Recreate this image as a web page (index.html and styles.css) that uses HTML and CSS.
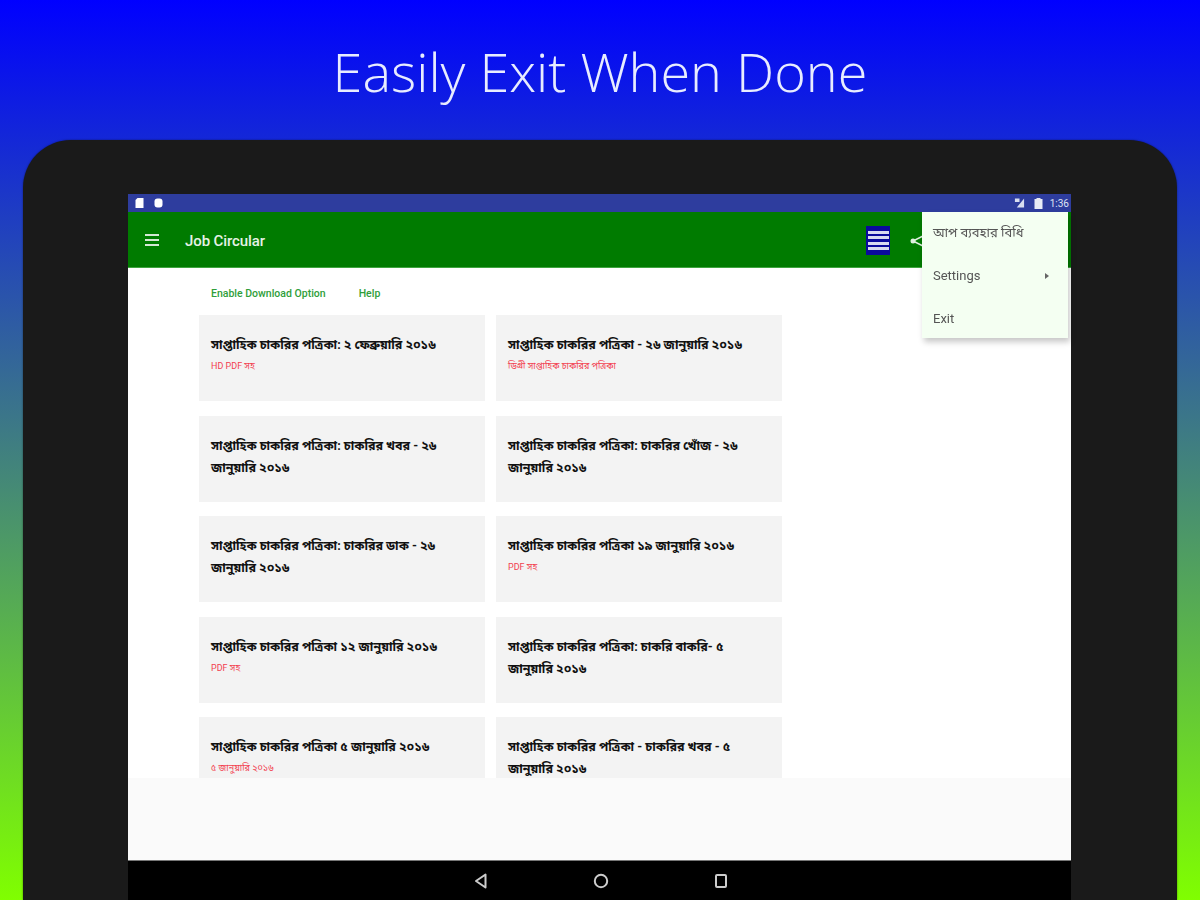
FILE: index.html
```html
<!DOCTYPE html>
<html lang="bn">
<head>
<meta charset="utf-8">
<title>Easily Exit When Done</title>
<link rel="stylesheet" href="styles.css">
</head>
<body>
<h1 class="headline">Easily Exit When Done</h1>
<div class="device">
  <div class="screen">
    <div class="status">
      <div class="status-group">
        <svg class="st-ic" viewBox="0 0 10 12"><path d="M1 3l2-2h6v10H1z" fill="#fff"/></svg>
        <svg class="st-ic" viewBox="0 0 10 12"><rect x="1" y="1.500" width="8" height="9" rx="3" fill="#fff"/></svg>
      </div>
      <div class="status-group">
        <svg class="st-ic" viewBox="0 0 12 12"><path d="M1 1h5v4H1zM11 1v10H3z" fill="#d8def0"/></svg>
        <svg class="st-ic" viewBox="0 0 10 12"><path d="M3 2V1h4v1h2v10H1V2z" fill="#e8ebf5"/></svg>
        <span class="clock">1:36</span>
      </div>
    </div>
    <header class="appbar">
      <svg class="burger" viewBox="0 0 14 12"><path d="M0 1h14M0 6h14M0 11h14" stroke="#d4e8d4" stroke-width="2"/></svg>
      <span class="app-title">Job Circular</span>
      <div class="app-actions">
        <div class="list-btn"><span></span><span></span><span></span><span></span></div>
        <svg class="share" viewBox="0 0 16 16"><path d="M13 3L3 8l10 5" stroke="#dff0df" stroke-width="1.500" fill="none"/><circle cx="3" cy="8" r="2.500" fill="#dff0df"/></svg>
      </div>
    </header>
    <main class="content">
      <nav class="links"><span>Enable Download Option</span><span>Help</span></nav>
      <div class="grid">
        <article class="card"><h2>সাপ্তাহিক চাকরির পত্রিকা: ২ ফেব্রুয়ারি ২০১৬</h2><p>HD PDF সহ</p></article>
        <article class="card"><h2>সাপ্তাহিক চাকরির পত্রিকা - ২৬ জানুয়ারি ২০১৬</h2><p>ডিগ্রী সাপ্তাহিক চাকরির পত্রিকা</p></article>
        <article class="card"><h2>সাপ্তাহিক চাকরির পত্রিকা: চাকরির খবর - ২৬ জানুয়ারি ২০১৬</h2></article>
        <article class="card"><h2>সাপ্তাহিক চাকরির পত্রিকা: চাকরির খোঁজ - ২৬ জানুয়ারি ২০১৬</h2></article>
        <article class="card"><h2>সাপ্তাহিক চাকরির পত্রিকা: চাকরির ডাক - ২৬ জানুয়ারি ২০১৬</h2></article>
        <article class="card"><h2>সাপ্তাহিক চাকরির পত্রিকা ১৯ জানুয়ারি ২০১৬</h2><p>PDF সহ</p></article>
        <article class="card"><h2>সাপ্তাহিক চাকরির পত্রিকা ১২ জানুয়ারি ২০১৬</h2><p>PDF সহ</p></article>
        <article class="card"><h2>সাপ্তাহিক চাকরির পত্রিকা: চাকরি বাকরি- ৫ জানুয়ারি ২০১৬</h2></article>
        <article class="card"><h2>সাপ্তাহিক চাকরির পত্রিকা ৫ জানুয়ারি ২০১৬</h2><p>৫ জানুয়ারি ২০১৬</p></article>
        <article class="card"><h2>সাপ্তাহিক চাকরির পত্রিকা - চাকরির খবর - ৫ জানুয়ারি ২০১৬</h2></article>
      </div>
    </main>
    <div class="ad-strip"></div>
    <footer class="navbar">
      <svg class="nav-ic" viewBox="0 0 16 16"><path d="M12.500 1.500v13L3 8z" fill="none" stroke="#ccc" stroke-width="2" stroke-linejoin="round"/></svg>
      <svg class="nav-ic" viewBox="0 0 16 16"><circle cx="8" cy="8" r="6.200" fill="none" stroke="#ccc" stroke-width="2"/></svg>
      <svg class="nav-ic" viewBox="0 0 16 16"><rect x="3" y="2" width="10" height="12" rx="1" fill="none" stroke="#ccc" stroke-width="2"/></svg>
    </footer>
    <div class="menu">
      <div class="menu-item">আপ ব্যবহার বিধি</div>
      <div class="menu-item menu-sub">Settings<span class="caret"></span></div>
      <div class="menu-item">Exit</div>
    </div>
  </div>
</div>
</body>
</html>
```

FILE: styles.css
```css
* { box-sizing: border-box; }
html, body { margin: 0; height: 900px; overflow: hidden; }
body {
  background: linear-gradient(180deg, #0000ff 0%, #80ff00 100%);
  font-family: "Roboto", "Noto Sans", "Noto Sans Bengali", sans-serif;
  display: flex;
  flex-direction: column;
  align-items: center;
}
.headline {
  margin: 0;
  height: 140px;
  padding-top: 34px;
  font-family: "Open Sans", sans-serif;
  font-weight: 300;
  font-size: 54px;
  line-height: 74px;
  color: #e8ecff;
  text-align: center;
  filter: blur(0.5px);
}
.device {
  width: 1154px;
  height: 760px;
  flex: none;
  padding: 54px 106px 0 105px;
  background: #1a1a1a;
  border-radius: 48px 48px 0 0;
  box-shadow: 0 0 2px rgba(0, 0, 0, 0.5);
}
.screen {
  position: relative;
  width: 943px;
  height: 706px;
  display: flex;
  flex-direction: column;
  background: #fff;
  filter: blur(0.7px);
}
.status {
  height: 18px;
  flex: none;
  display: flex;
  justify-content: space-between;
  align-items: center;
  padding: 0 2px 0 6px;
  background: #2e3d9e;
}
.status-group { display: flex; align-items: center; gap: 8px; }
.st-ic { width: 11px; height: 12px; display: block; }
.clock { font-size: 10px; color: #dfe3f3; margin-left: -2px; }
.appbar {
  height: 56px;
  flex: none;
  display: flex;
  align-items: center;
  padding: 2px 145px 0 17px;
  background: #007b00;
  border-bottom: 1px solid #3fa53f;
}
.burger { width: 14px; height: 12px; margin-top: -2px; }
.app-title {
  margin-left: 26px;
  font-size: 15px;
  font-weight: 500;
  color: #e6f2e6;
  letter-spacing: -0.1px;
}
.app-actions { margin-left: auto; display: flex; align-items: center; gap: 20px; }
.list-btn {
  width: 24px;
  height: 29px;
  padding: 5px 0;
  display: flex;
  flex-direction: column;
  justify-content: space-between;
  align-items: center;
  background: #0a0a9c;
}
.list-btn span { display: block; width: 21px; height: 3px; background: #d8daf0; }
.share { width: 16px; height: 16px; }
.content {
  height: 510px;
  flex: none;
  overflow: hidden;
  padding: 0 289px 0 71px;
}
.links {
  height: 47px;
  display: flex;
  align-items: center;
  gap: 33px;
  padding: 4px 0 0 12px;
  font-size: 10.500px;
  font-weight: 500;
  color: #2f9e3a;
}
.grid {
  display: grid;
  grid-template-columns: 286px 286px;
  grid-auto-rows: 86px;
  column-gap: 11px;
  row-gap: 14.500px;
}
.card {
  padding: 19px 12px 0;
  background: #f3f3f3;
}
.card h2 {
  margin: 0;
  font-size: 12.500px;
  font-weight: 700;
  line-height: 22px;
  color: #111;
}
.card p {
  margin: 4px 0 0;
  font-size: 9px;
  line-height: 12px;
  color: #f2404f;
}
.ad-strip { flex: 1; background: #fafafa; }
.navbar {
  height: 40px;
  flex: none;
  display: flex;
  justify-content: center;
  align-items: center;
  gap: 104px;
  padding-left: 2px;
  background: #000;
  border-top: 1px solid #777;
}
.nav-ic { width: 16px; height: 16px; display: block; }
.menu {
  position: absolute;
  top: 18px;
  left: 794px;
  width: 146px;
  height: 126px;
  background: #f4fff2;
  box-shadow: 2px 4px 6px rgba(0, 0, 0, 0.22);
}
.menu-item {
  height: 42.500px;
  display: flex;
  align-items: center;
  padding: 0 11px;
  font-size: 13px;
  color: #555;
}
.menu-sub { justify-content: space-between; padding-right: 19px; }
.caret {
  width: 0;
  height: 0;
  border-left: 4px solid #666;
  border-top: 3px solid transparent;
  border-bottom: 3px solid transparent;
}
```
